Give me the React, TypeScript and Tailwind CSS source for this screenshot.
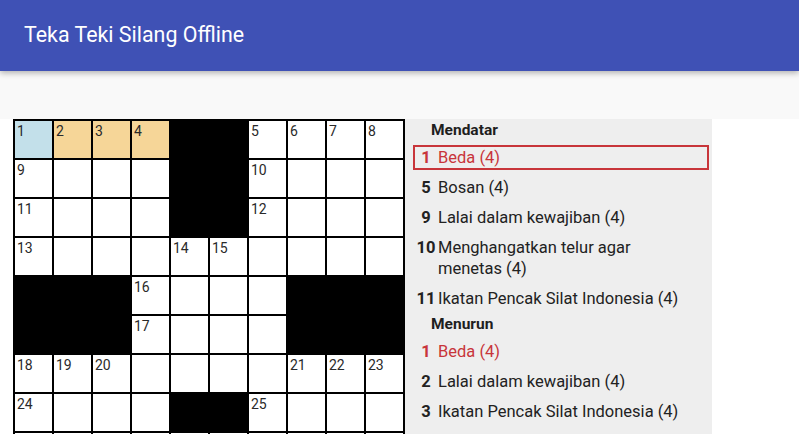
import React from 'react';

// '#' = blocked square, '' = empty square, number string = clue number
const GRID: string[][] = [
  ['1', '2', '3', '4', '#', '#', '5', '6', '7', '8'],
  ['9', '', '', '', '#', '#', '10', '', '', ''],
  ['11', '', '', '', '#', '#', '12', '', '', ''],
  ['13', '', '', '', '14', '15', '', '', '', ''],
  ['#', '#', '#', '16', '', '', '', '#', '#', '#'],
  ['#', '#', '#', '17', '', '', '', '#', '#', '#'],
  ['18', '19', '20', '', '', '', '', '21', '22', '23'],
  ['24', '', '', '', '#', '#', '25', '', '', ''],
  ['', '', '', '', '', '', '', '', '', ''],
];

const MENDATAR = [
  { no: '1', text: 'Beda (4)', active: true },
  { no: '5', text: 'Bosan (4)' },
  { no: '9', text: 'Lalai dalam kewajiban (4)' },
  { no: '10', text: 'Menghangatkan telur agar menetas (4)' },
  { no: '11', text: 'Ikatan Pencak Silat Indonesia (4)' },
];

const MENURUN = [
  { no: '1', text: 'Beda (4)', red: true },
  { no: '2', text: 'Lalai dalam kewajiban (4)' },
  { no: '3', text: 'Ikatan Pencak Silat Indonesia (4)' },
];

function cellBg(r: number, c: number, v: string) {
  if (v === '#') return 'bg-black';
  if (r === 0 && c === 0) return 'bg-[#c3e0ea]';
  if (r === 0 && c > 0 && c < 4) return 'bg-[#f6d698]';
  return 'bg-white';
}

type Clue = { no: string; text: string; active?: boolean; red?: boolean };

function ClueRow({ clue }: { clue: Clue }) {
  const isRed = clue.active || clue.red;
  return (
    <div
      className={`ml-[8px] mr-[3px] mb-[5px] flex border-2 leading-[21px] text-[16.5px] ${
        clue.active ? 'border-[#c8353a]' : 'border-transparent'
      } ${isRed ? 'text-[#c8353a]' : 'text-[#222222]'}`}
    >
      <span className="w-[22px] shrink-0 text-center font-bold">{clue.no}</span>
      <span className="ml-px max-w-[252px]">{clue.text}</span>
    </div>
  );
}

export default function App() {
  return (
    <div className="h-[434px] w-[799px] overflow-hidden bg-white" style={{ fontFamily: 'Roboto, "Noto Sans", sans-serif' }}>
      <header className="relative z-10 flex h-[71px] items-center bg-[#3f51b5] pl-[24px] shadow-[0_2px_6px_rgba(0,0,0,0.3)]">
        <h1 className="text-[21.4px] text-white">Teka Teki Silang Offline</h1>
      </header>

      <div className="h-[48px] bg-[#f9f9f9]" />

      <div className="flex">
        <div className="ml-[13px] grid w-[392px] shrink-0 grid-cols-10 gap-[2px] self-start bg-black p-[2px]">
          {GRID.map((row, r) =>
            row.map((v, c) => (
              <div key={`${r}-${c}`} className={`h-[37px] ${cellBg(r, c, v)}`}>
                {v !== '#' && v !== '' && (
                  <span className="block pl-[2px] pt-[2px] text-[14px] leading-[16px] text-[#2a2a2a]">{v}</span>
                )}
              </div>
            ))
          )}
        </div>

        <div className="h-[400px] w-[307px] shrink-0 bg-[#eeeeee] pt-[3px]">
          <div className="mb-[7px] pl-[26px] text-[15.5px] font-bold leading-[16px] text-[#1e1e1e]">Mendatar</div>
          {MENDATAR.map((c) => (
            <ClueRow key={'a' + c.no} clue={c} />
          ))}
          <div className="mb-[7px] pl-[26px] text-[15.5px] font-bold leading-[16px] text-[#1e1e1e]">Menurun</div>
          {MENURUN.map((c) => (
            <ClueRow key={'d' + c.no} clue={c} />
          ))}
        </div>
      </div>
    </div>
  );
}
